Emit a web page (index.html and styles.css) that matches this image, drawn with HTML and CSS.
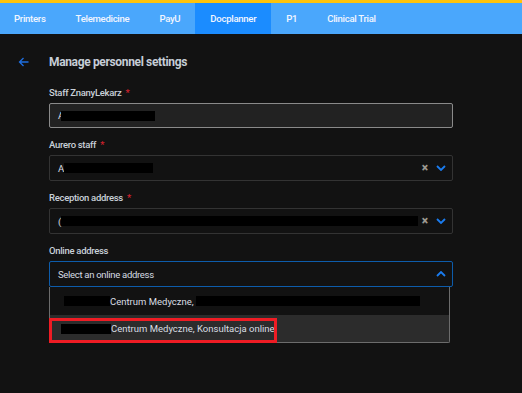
FILE: index.html
```html
<!DOCTYPE html>
<html lang="en">
<head>
    <meta charset="UTF-8">
    <meta name="viewport" content="width=device-width, initial-scale=1.0">
    <title>Manage personnel settings</title>
    <link rel="stylesheet" href="styles.css">
</head>
<body>
    <div class="topline"></div>
    <nav class="tabs">
        <a class="tab first" href="#">Printers</a>
        <a class="tab" href="#">Telemedicine</a>
        <a class="tab" href="#">PayU</a>
        <a class="tab active" href="#">Docplanner</a>
        <a class="tab" href="#">P1</a>
        <a class="tab" href="#">Clinical Trial</a>
    </nav>

    <main class="page">
        <div class="title-row">
            <a class="back" href="#">
                <svg width="11" height="10" viewBox="0 0 11 10">
                    <path d="M10.5 5H1.5M5.5 1L1.5 5L5.5 9" fill="none" stroke="#1f6fe0" stroke-width="1.3"/>
                </svg>
            </a>
            <h1 class="title">Manage personnel settings</h1>
        </div>

        <form class="form">
            <div class="field">
                <label class="label">Staff ZnanyLekarz <span class="req">*</span></label>
                <div class="control input">
                    <span class="value short">A</span><span class="redact" style="width: 94px"></span>
                </div>
            </div>

            <div class="field">
                <label class="label">Aurero staff <span class="req">*</span></label>
                <div class="control select">
                    <span class="value">A</span><span class="redact" style="width: 89px"></span>
                    <span class="icons">
                        <span class="clear">&times;</span>
                        <svg class="chev" width="10" height="6" viewBox="0 0 10 6"><path d="M1 1L5 5L9 1" fill="none" stroke="#1a7cf0" stroke-width="1.8"/></svg>
                    </span>
                </div>
            </div>

            <div class="field">
                <label class="label">Reception address <span class="req">*</span></label>
                <div class="control select">
                    <span class="value short">(</span><span class="redact" style="width: 357px"></span>
                    <span class="icons">
                        <span class="clear">&times;</span>
                        <svg class="chev" width="10" height="6" viewBox="0 0 10 6"><path d="M1 1L5 5L9 1" fill="none" stroke="#1a7cf0" stroke-width="1.8"/></svg>
                    </span>
                </div>
            </div>

            <div class="field open">
                <label class="label">Online address</label>
                <div class="control select focused">
                    <span class="placeholder">Select an online address</span>
                    <span class="icons">
                        <svg class="chev" width="10" height="6" viewBox="0 0 10 6"><path d="M1 5L5 1L9 5" fill="none" stroke="#1a7cf0" stroke-width="1.8"/></svg>
                    </span>
                </div>
                <div class="dropdown">
                    <div class="option">
                        <span class="redact" style="width: 46px"></span><span class="opt-text">Centrum Medyczne, </span><span class="redact" style="width: 224px"></span>
                    </div>
                    <div class="option marked">
                        <span class="redact" style="width: 50px"></span><span class="opt-text">Centrum Medyczne, Konsultacja online</span>
                        <div class="highlight"></div>
                    </div>
                </div>
            </div>
        </form>
    </main>
</body>
</html>
```

FILE: styles.css
```css
* {
    margin: 0;
    padding: 0;
    box-sizing: border-box;
}

body {
    font-family: 'Roboto', 'Liberation Sans', sans-serif;
    background: #121212;
    color: #d7dde4;
    width: 522px;
    height: 393px;
    overflow: hidden;
}

/* Top bar */
.topline {
    height: 3px;
    background: #ffc30b;
}

.tabs {
    display: flex;
    height: 31px;
    background: #4aa7fc;
}

.tab {
    display: flex;
    align-items: center;
    padding: 0 15px;
    color: #f2f6ff;
    font-size: 9.6px;
    font-weight: 500;
    letter-spacing: -0.3px;
    text-decoration: none;
}

.tab.first {
    padding-left: 14px;
}

.tab.active {
    background: #1b8cff;
}

/* Page */
.page {
    padding-top: 19px;
}

.title-row {
    display: flex;
    align-items: center;
    height: 18px;
}

.back {
    display: flex;
    width: 49px;
    padding-left: 18px;
}

.title {
    font-size: 12px;
    font-weight: 700;
    letter-spacing: -0.35px;
    color: #c6cdd6;
}

.form {
    margin-top: 15px;
    margin-left: 49px;
    width: 404px;
}

.field {
    margin-bottom: 10px;
}

.label {
    display: block;
    height: 14px;
    line-height: 14px;
    margin-bottom: 3px;
    font-size: 9.5px;
    font-weight: 500;
    letter-spacing: -0.3px;
    color: #c9d0d8;
}

.req {
    color: #d3212d;
    margin-left: 2px;
}

.control {
    display: flex;
    align-items: center;
    height: 26px;
    padding: 0 6px 0 8px;
    border: 1px solid #333;
    border-radius: 2px;
    font-size: 9.5px;
    color: #d9dde2;
}

.control.input {
    height: 25px;
    background: #222;
    border-color: #8a8a8a;
}

.control.focused {
    border-color: #0d5cab;
}

.value.short {
    width: 3px;
}

.redact {
    display: inline-block;
    height: 10px;
    background: #000;
}

.icons {
    margin-left: auto;
    display: flex;
    align-items: center;
    gap: 8px;
}

.clear {
    font-size: 12px;
    font-weight: 900;
    color: #9c9890;
    line-height: 1;
}

.chev {
    display: block;
}

.placeholder {
    letter-spacing: -0.3px;
    color: #d5dbe2;
}

/* Dropdown */
.field.open {
    position: relative;
}

.dropdown {
    width: 401px;
    border: 1px solid #6c6c6c;
    border-top: none;
    border-radius: 0 0 2px 2px;
}

.option {
    position: relative;
    display: flex;
    align-items: center;
    height: 28px;
    padding-left: 14px;
    font-size: 9.5px;
    color: #d9dde2;
}

.option.marked {
    height: 27px;
    padding-left: 11px;
    background: #2c2c2c;
}

.opt-text {
    white-space: pre;
}

.highlight {
    position: absolute;
    left: -1px;
    top: 3px;
    width: 228px;
    height: 25px;
    border: 3px solid #ee1c24;
}
```
